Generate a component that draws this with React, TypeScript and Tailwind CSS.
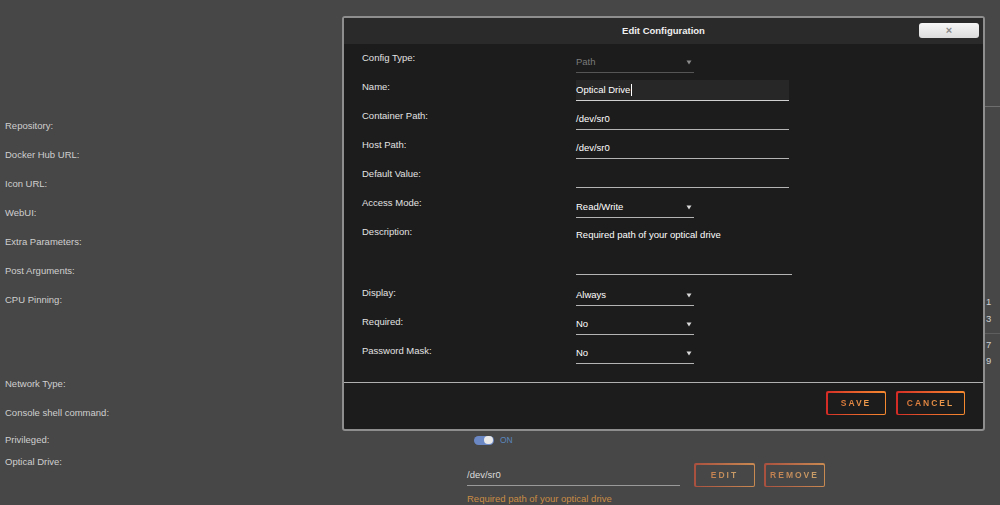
const font = { fontFamily: '"Liberation Sans", Arial, sans-serif' }

function Caret({ dim }: { dim?: boolean }) {
  return (
    <svg width="6" height="5" viewBox="0 0 6 5" className="shrink-0">
      <path d="M0.5 0.5 L5.5 0.5 L3 4.5 Z" fill={dim ? '#8a8a8a' : '#d8d8d8'} />
    </svg>
  )
}

function GradButton({ label, w, dim }: { label: string; w: string; dim?: boolean }) {
  return (
    <div
      className={`${w} h-[24px] p-[1.5px] rounded-[2px] ${
        dim ? 'bg-gradient-to-r from-[#a9503f] to-[#c98a52]' : 'bg-gradient-to-r from-[#d42a26] to-[#f68a30]'
      }`}
    >
      <div className={`w-full h-full rounded-[1px] flex items-center justify-center ${dim ? 'bg-[#474747]' : 'bg-[#1c1c1c]'}`}>
        <span
          className={`text-[8.5px] font-bold tracking-[2px] bg-clip-text text-transparent ${
            dim ? 'bg-gradient-to-r from-[#c4804f] to-[#c9a06a]' : 'bg-gradient-to-r from-[#e07a3a] to-[#f0a050]'
          }`}
        >
          {label}
        </span>
      </div>
    </div>
  )
}

function Row({ label, children, h = 'h-[29px]' }: { label: string; children: React.ReactNode; h?: string }) {
  return (
    <div className={`flex ${h}`}>
      <div className="w-[214px] mt-[4px] leading-[14px] text-[#e2e2e2]">{label}</div>
      {children}
    </div>
  )
}

function TextField({ value, w = 'w-[213px]' }: { value: string; w?: string }) {
  return (
    <div className={`${w} mt-[5px] h-[20px] border-b border-[#b4b4b4] flex items-center text-white`}>{value}</div>
  )
}

function SelectField({ value, dim, low }: { value: string; dim?: boolean; low?: boolean }) {
  return (
    <div
      className={`w-[118px] ${low ? 'mt-[6px]' : 'mt-[4px]'} h-[20px] border-b flex items-center justify-between pr-[2px] ${
        dim ? 'border-[#555] text-[#7a7a7a]' : 'border-[#b4b4b4] text-white'
      }`}
    >
      <span>{value}</span>
      <Caret dim={dim} />
    </div>
  )
}

function EditModal() {
  return (
    <div className="absolute left-[342px] top-[16px] w-[643px] h-[415px] border-2 border-[#8e8e8e] rounded-[3px] bg-[#1c1c1c] flex flex-col overflow-hidden">
      <div className="h-[26px] bg-[#2a2a2a] relative flex items-center justify-center shrink-0">
        <span className="text-[9.5px] font-bold text-[#f0f0f0]">Edit Configuration</span>
        <div className="absolute right-[4px] top-[5px] w-[60px] h-[15px] rounded-[3px] bg-gradient-to-b from-[#f6f6f6] to-[#dcdcdc] flex items-center justify-center">
          <span className="text-[11px] leading-none font-bold text-[#888]">×</span>
        </div>
      </div>
      <div className="pl-[18px] pt-[3px] flex flex-col text-[9.5px]">
        <Row label="Config Type:">
          <SelectField value="Path" dim low />
        </Row>
        <Row label="Name:">
          <div className="w-[213px] mt-[4px] h-[21px] bg-[#272727] border-b border-[#d0d0d0] flex items-center text-white">
            Optical Drive<span className="w-px h-[12px] bg-white ml-px" />
          </div>
        </Row>
        <Row label="Container Path:">
          <TextField value="/dev/sr0" />
        </Row>
        <Row label="Host Path:">
          <TextField value="/dev/sr0" />
        </Row>
        <Row label="Default Value:">
          <TextField value="" />
        </Row>
        <Row label="Access Mode:">
          <SelectField value="Read/Write" low />
        </Row>
        <Row label="Description:" h="h-[61px]">
          <div className="w-[216px] mt-[5px] h-[49px] border-b border-[#b4b4b4] pt-[2px] leading-[14px] text-white">
            Required path of your optical drive
          </div>
        </Row>
        <Row label="Display:">
          <SelectField value="Always" />
        </Row>
        <Row label="Required:">
          <SelectField value="No" />
        </Row>
        <Row label="Password Mask:">
          <SelectField value="No" />
        </Row>
      </div>
      <div className="mt-[13px] border-t border-[#b0b0b0]" />
      <div className="flex justify-end gap-[10px] pr-[18px] pt-[8px]">
        <GradButton label="SAVE" w="w-[60px]" />
        <GradButton label="CANCEL" w="w-[69px]" />
      </div>
    </div>
  )
}

function BgRow({ label, h = 'h-[29px]', children }: { label: string; h?: string; children?: React.ReactNode }) {
  return (
    <div className={`flex ${h}`}>
      <div className="w-[467px] pl-[5px] h-[29px] flex items-center text-[#cfcfcf]">{label}</div>
      {children}
    </div>
  )
}

export default function App() {
  return (
    <div className="w-[1000px] h-[505px] bg-[#474747] relative overflow-hidden text-[9.5px]" style={font}>
      <div className="h-[106px]" />
      <div className="ml-[600px] border-t border-[#6e6e6e]" />
      <div className="h-[5px]" />
      <BgRow label="Repository:" />
      <BgRow label="Docker Hub URL:" />
      <BgRow label="Icon URL:" />
      <BgRow label="WebUI:" />
      <BgRow label="Extra Parameters:" />
      <BgRow label="Post Arguments:" />
      <BgRow label="CPU Pinning:" h="h-[84px]">
        <div className="flex-1 flex justify-end">
          <div className="w-[15px] flex flex-col text-[#cfcfcf] leading-[14px]">
            <div className="pl-[1px] pt-[9px]">1</div>
            <div className="pl-[1px] pt-[3px]">3</div>
            <div className="mt-[7px] border-t border-[#5e5e5e]" />
            <div className="pl-[1px] pt-[4px]">7</div>
            <div className="pl-[1px] pt-[2px]">9</div>
          </div>
        </div>
      </BgRow>
      <BgRow label="Network Type:" />
      <BgRow label="Console shell command:" />
      <div className="flex h-[24px]">
        <div className="w-[467px] pl-[5px] flex items-center text-[#cfcfcf]">Privileged:</div>
        <div className="flex items-center pl-[7px] gap-[6px]">
          <div className="w-[20px] h-[9px] rounded-full bg-[#6b87c4] flex justify-end items-center pr-[1px]">
            <div className="w-[9px] h-[8px] rounded-full bg-[#e9e9e9]" />
          </div>
          <span className="text-[#5b86bd] text-[8.5px]">ON</span>
        </div>
      </div>
      <div className="flex">
        <div className="w-[467px] pl-[5px] pt-[3px] leading-[14px] text-[#cfcfcf]">Optical Drive:</div>
        <div className="flex flex-col pt-[11px]">
          <div className="flex items-center">
            <div className="w-[213px] h-[20px] border-b border-[#9a9a9a] flex items-center text-[#dcdcdc] mt-[1px]">/dev/sr0</div>
            <div className="ml-[14px] flex gap-[9px]">
              <GradButton label="EDIT" w="w-[61px]" dim />
              <GradButton label="REMOVE" w="w-[61px]" dim />
            </div>
          </div>
          <div className="mt-[5px] text-[#c98c45]">Required path of your optical drive</div>
        </div>
      </div>
      <EditModal />
    </div>
  )
}
